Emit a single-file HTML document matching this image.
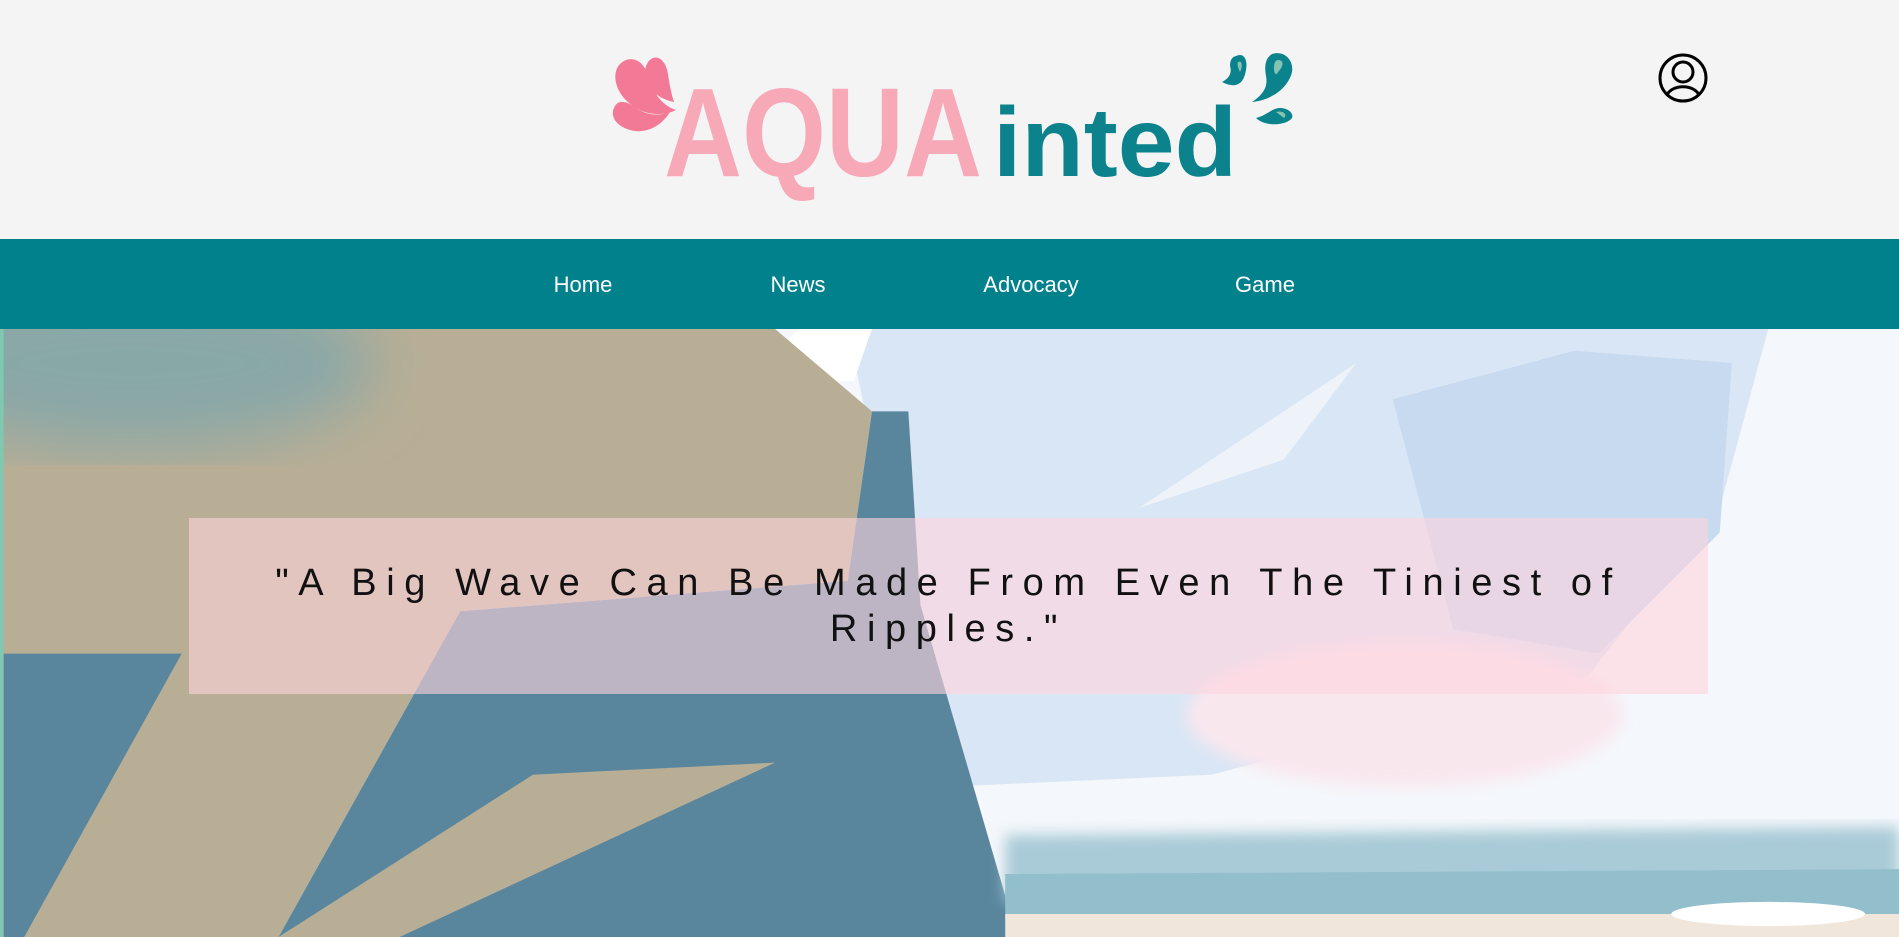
<!DOCTYPE html>
<html><head><meta charset="utf-8">
<style>
html,body{margin:0;padding:0;width:1899px;height:937px;overflow:hidden;background:#f4f4f4;font-family:"Liberation Sans",sans-serif;}
#header{position:absolute;left:0;top:0;width:1899px;height:239px;background:#f4f4f4;}
#nav{position:absolute;left:0;top:239px;width:1899px;height:90px;background:#00818c;}
#nav span{position:absolute;top:33px;color:#fff;font-size:22px;transform:translateX(-50%);white-space:nowrap;}
#hero{position:absolute;left:0;top:329px;width:1899px;height:608px;overflow:hidden;}
#quote{position:absolute;left:189px;top:518px;width:1519px;height:176px;background:rgba(255,212,222,0.6);}
#quote p{margin:0;position:absolute;left:0;right:0;top:42px;text-align:center;font-size:38px;letter-spacing:9.6px;line-height:46px;color:#111;}
</style></head><body>
<div id="header">
<svg width="1899" height="239" style="position:absolute;left:0;top:0">
  <g fill="#f37a96">
    <path d="M620 64 C630 54 644 60 648 76 C654 96 664 106 676 110 C660 118 640 114 628 102 C614 90 612 72 620 64Z"/>
    <path d="M648 62 C656 52 666 60 668 74 C670 88 672 96 674 102 C664 100 652 94 648 84 C644 76 644 68 648 62Z"/>
    <path d="M614 108 C618 98 628 102 636 108 C648 116 660 116 670 112 C660 128 644 134 630 130 C616 126 610 116 614 108Z"/>
  </g>
  <text x="664" y="176" font-family="Liberation Sans" font-weight="bold" font-size="126" fill="#f7a9b8" textLength="318" lengthAdjust="spacingAndGlyphs">AQUA</text>
  <text x="993" y="176" font-family="Liberation Sans" font-weight="bold" font-size="98" fill="#0b828c" textLength="244" lengthAdjust="spacingAndGlyphs">inted</text>
  <g fill="#0b838d">
    <path d="M1236 56 C1244 52 1248 60 1246 70 C1244 82 1238 90 1222 82 C1230 78 1232 72 1230 66 C1230 60 1232 57 1236 56Z"/>
    <path d="M1272 54 C1284 50 1294 60 1292 72 C1288 88 1272 100 1252 102 C1264 94 1268 86 1266 76 C1264 64 1266 58 1272 54Z"/>
    <path d="M1256 118 C1266 116 1272 108 1280 108 C1290 108 1296 116 1290 120 C1282 126 1264 126 1256 118Z"/>
  </g>
  <g fill="#84c2b2"><path d="M1238 62 C1242 60 1243 66 1240 72 C1238 68 1237 64 1238 62Z"/><path d="M1278 60 C1284 60 1284 66 1278 72 C1276 76 1274 74 1274 68 C1274 62 1276 60 1278 60Z"/><path d="M1276 112 C1282 110 1288 114 1284 118 Z"/></g>
  <g fill="none" stroke="#000" stroke-width="3"><circle cx="1683" cy="78" r="23"/><circle cx="1683" cy="72" r="10"/><path d="M1667 95 C1672 84 1694 84 1699 95"/></g>
</svg>
</div>
<div id="nav"><span style="left:583px">Home</span><span style="left:798px">News</span><span style="left:1031px">Advocacy</span><span style="left:1265px">Game</span></div>
<div id="hero">
<svg width="1899" height="608" viewBox="0 272 1568 502" preserveAspectRatio="none">
  <defs><filter id="b"><feGaussianBlur stdDeviation="25"/></filter><filter id="c"><feGaussianBlur stdDeviation="6"/></filter></defs>
  <rect x="0" y="272" width="1568" height="502" fill="#f4f7fb"/>
  <polygon points="700,272 1460,272 1420,420 1310,560 1000,640 780,650" fill="#d9e6f5"/>
  <polygon points="1150,330 1300,290 1430,300 1420,440 1320,540 1200,520" fill="#c8daef"/>
  <polygon points="940,420 1120,300 1060,380" fill="#eef3fa"/>
  <polygon points="615,315 660,272 720,272 705,315" fill="#ffffff"/>
  <polygon points="0,272 640,272 720,340 700,480 380,505 230,774 0,774" fill="#b8ae95"/>
  <ellipse cx="110" cy="300" rx="200" ry="70" fill="#88a7a7" filter="url(#b)"/>
  <polygon points="720,340 750,340 760,500 840,774 230,774 380,505 700,480" fill="#5a869d"/>
  <polygon points="440,640 640,630 330,774 230,774" fill="#b8ae95"/>
  <polygon points="0,540 150,540 20,774 0,774" fill="#5a869d"/>
  <ellipse cx="1160" cy="590" rx="180" ry="60" fill="#f9e7ee" filter="url(#c)"/>
  <polygon points="830,690 1568,683 1568,745 830,745" fill="#a9cbd7" filter="url(#c)"/>
  <polygon points="830,722 1568,718 1568,758 830,758" fill="#93bfcd"/>
  <rect x="830" y="755" width="738" height="19" fill="#f1e6dc"/>
  <ellipse cx="1460" cy="755" rx="80" ry="10" fill="#fff"/>
  <rect x="0" y="272" width="3" height="502" fill="#7fc9b0"/>
</svg>
</div>
<div id="quote"><p>"A Big Wave Can Be Made From Even The Tiniest of<br>Ripples."</p></div>
</body></html>
